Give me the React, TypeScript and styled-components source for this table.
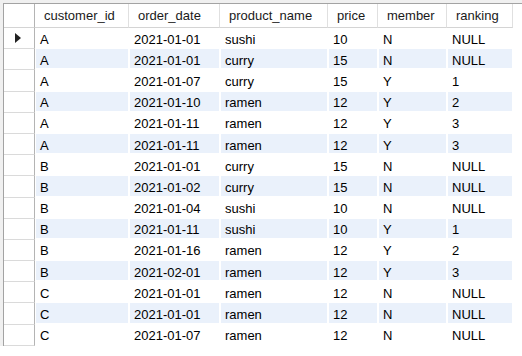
import React from "react";
import styled, { createGlobalStyle } from "styled-components";

const Global = createGlobalStyle`
  html, body { margin: 0; padding: 0; background: #ffffff; }
  body { font-family: "Liberation Sans", Arial, sans-serif; }
`;

const Outer = styled.div`
  display: flex;
  padding: 3px 0 0 3px;
  background: #f0f0f0;
  width: 519px;
`;

const Frame = styled.div`
  flex: 1;
  background: #ffffff;
  border-top: 1px solid #a3a3a3;
  border-left: 1px solid #a3a3a3;
  box-shadow: inset 1px 0 0 #e2e2e2;
`;

const Grid = styled.div`
  display: grid;
  grid-template-columns: 31px 94px 91px 108px 50px 69px 66px;
  grid-template-rows: 24px;
  grid-auto-rows: 21.2px;
  font-size: 13px;
  color: #000;
`;

const Corner = styled.div`
  border-right: 1px solid #b4b4b4;
  border-bottom: 1px solid #d4d4d4;
  background: #fff;
`;

const HeaderCell = styled.div`
  display: flex;
  align-items: center;
  padding-left: 9px;
  border-right: 1px solid #e0e0e0;
  border-bottom: 1px solid #d4d4d4;
  background: #fff;
  color: #1a1a1a;
  white-space: nowrap;
  overflow: hidden;
`;

const RowHeader = styled.div`
  display: flex;
  align-items: center;
  padding-left: 11px;
  border-right: 1px solid #b4b4b4;
  border-bottom: 1px solid #dadada;
  box-sizing: border-box;
  background: #fff;
`;

const DataCell = styled.div<{ $striped: boolean }>`
  display: flex;
  align-items: center;
  padding: 3px 0 0 4px;
  box-sizing: border-box;
  border-left: 1px solid #fff;
  border-right: 1px solid #fff;
  border-bottom: 2px solid #fff;
  background: ${(p) => (p.$striped ? "#eaf1fb" : "#ffffff")};
  white-space: nowrap;
  overflow: hidden;
`;

const Marker = () => (
  <svg width="7" height="10" viewBox="0 0 7 10">
    <polygon points="0,0 6,5 0,10" fill="#222" />
  </svg>
);

const columns = ["customer_id", "order_date", "product_name", "price", "member", "ranking"];

const rows: string[][] = [
  ["A", "2021-01-01", "sushi", "10", "N", "NULL"],
  ["A", "2021-01-01", "curry", "15", "N", "NULL"],
  ["A", "2021-01-07", "curry", "15", "Y", "1"],
  ["A", "2021-01-10", "ramen", "12", "Y", "2"],
  ["A", "2021-01-11", "ramen", "12", "Y", "3"],
  ["A", "2021-01-11", "ramen", "12", "Y", "3"],
  ["B", "2021-01-01", "curry", "15", "N", "NULL"],
  ["B", "2021-01-02", "curry", "15", "N", "NULL"],
  ["B", "2021-01-04", "sushi", "10", "N", "NULL"],
  ["B", "2021-01-11", "sushi", "10", "Y", "1"],
  ["B", "2021-01-16", "ramen", "12", "Y", "2"],
  ["B", "2021-02-01", "ramen", "12", "Y", "3"],
  ["C", "2021-01-01", "ramen", "12", "N", "NULL"],
  ["C", "2021-01-01", "ramen", "12", "N", "NULL"],
  ["C", "2021-01-07", "ramen", "12", "N", "NULL"],
];

export default function App() {
  return (
    <>
      <Global />
      <Outer>
        <Frame>
          <Grid>
            <Corner />
            {columns.map((c) => (
              <HeaderCell key={c}>{c}</HeaderCell>
            ))}
            {rows.map((r, i) => (
              <React.Fragment key={i}>
                <RowHeader>{i === 0 ? <Marker /> : null}</RowHeader>
                {r.map((v, j) => (
                  <DataCell key={j} $striped={i % 2 === 1}>
                    {v}
                  </DataCell>
                ))}
              </React.Fragment>
            ))}
          </Grid>
        </Frame>
      </Outer>
    </>
  );
}
